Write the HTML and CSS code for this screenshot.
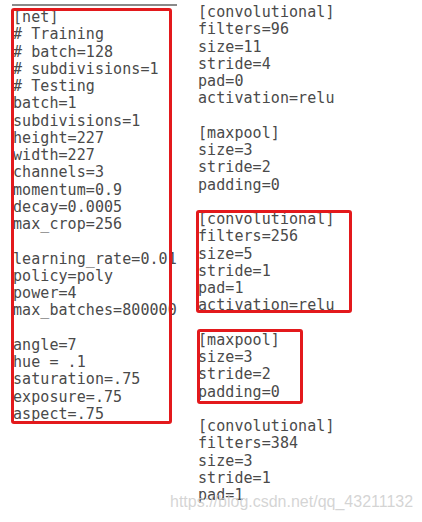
FILE: index.html
```html
<!DOCTYPE html>
<html>
<head>
<meta charset="utf-8">
<link rel="stylesheet" href="styles.css">
</head>
<body>
<div class="page">
  <div class="col col-left">
    <div class="group boxed box-net">
<div class="ln">[net]</div>
<div class="ln"># Training</div>
<div class="ln"># batch=128</div>
<div class="ln"># subdivisions=1</div>
<div class="ln"># Testing</div>
<div class="ln">batch=1</div>
<div class="ln">subdivisions=1</div>
<div class="ln">height=227</div>
<div class="ln">width=227</div>
<div class="ln">channels=3</div>
<div class="ln">momentum=0.9</div>
<div class="ln">decay=0.0005</div>
<div class="ln">max_crop=256</div>
<div class="ln"></div>
<div class="ln">learning_rate=0.01</div>
<div class="ln">policy=poly</div>
<div class="ln">power=4</div>
<div class="ln">max_batches=800000</div>
<div class="ln"></div>
<div class="ln">angle=7</div>
<div class="ln">hue = .1</div>
<div class="ln">saturation=.75</div>
<div class="ln">exposure=.75</div>
<div class="ln">aspect=.75</div>
    </div>
  </div>
  <div class="col col-right">
    <div class="group">
<div class="ln">[convolutional]</div>
<div class="ln">filters=96</div>
<div class="ln">size=11</div>
<div class="ln">stride=4</div>
<div class="ln">pad=0</div>
<div class="ln">activation=relu</div>
<div class="ln"></div>
<div class="ln">[maxpool]</div>
<div class="ln">size=3</div>
<div class="ln">stride=2</div>
<div class="ln">padding=0</div>
<div class="ln"></div>
    </div>
    <div class="group boxed box-conv">
<div class="ln">[convolutional]</div>
<div class="ln">filters=256</div>
<div class="ln">size=5</div>
<div class="ln">stride=1</div>
<div class="ln">pad=1</div>
<div class="ln">activation=relu</div>
    </div>
    <div class="ln"></div>
    <div class="group boxed box-pool">
<div class="ln">[maxpool]</div>
<div class="ln">size=3</div>
<div class="ln">stride=2</div>
<div class="ln">padding=0</div>
    </div>
    <div class="ln"></div>
    <div class="group">
<div class="ln">[convolutional]</div>
<div class="ln">filters=384</div>
<div class="ln">size=3</div>
<div class="ln">stride=1</div>
<div class="ln">pad=1</div>
    </div>
  </div>
  <div class="watermark">https://blog.csdn.net/qq_43211132</div>
</div>
</body>
</html>
```

FILE: styles.css
```css
html, body {
  margin: 0;
  padding: 0;
  background: #ffffff;
}

.page {
  position: relative;
  width: 422px;
  height: 522px;
  overflow: hidden;
  display: flex;
  font-family: "DejaVu Sans Mono", "Liberation Mono", monospace;
  font-size: 15px;
  letter-spacing: 0.07px;
  color: #4a4a4a;
}

.col-left {
  position: relative;
  width: 172px;
  padding: 9px 0 0 13px;
}

.col-left::before {
  content: "";
  position: absolute;
  left: 12px;
  top: 4px;
  width: 165px;
  height: 2px;
  background: #8a8a8a;
}

.col-right {
  padding: 4px 0 0 13px;
  flex: 1;
}

.ln {
  height: 17.25px;
  line-height: 17.25px;
  white-space: pre;
}

.boxed {
  position: relative;
}

.boxed::after {
  content: "";
  position: absolute;
  border: 3px solid #e3191c;
  border-radius: 3px;
  box-sizing: border-box;
}

.box-net::after {
  left: -2px;
  top: -1px;
  width: 161px;
  height: 416px;
}

.box-conv::after {
  left: -2px;
  top: -1px;
  width: 156px;
  height: 103px;
}

.box-pool::after {
  left: -1px;
  top: -3px;
  width: 106px;
  height: 75px;
}

.watermark {
  position: absolute;
  left: 170px;
  top: 493px;
  font-family: "Liberation Sans", Arial, sans-serif;
  font-size: 16px;
  letter-spacing: 0;
  color: rgba(205, 205, 205, 0.85);
}
```
